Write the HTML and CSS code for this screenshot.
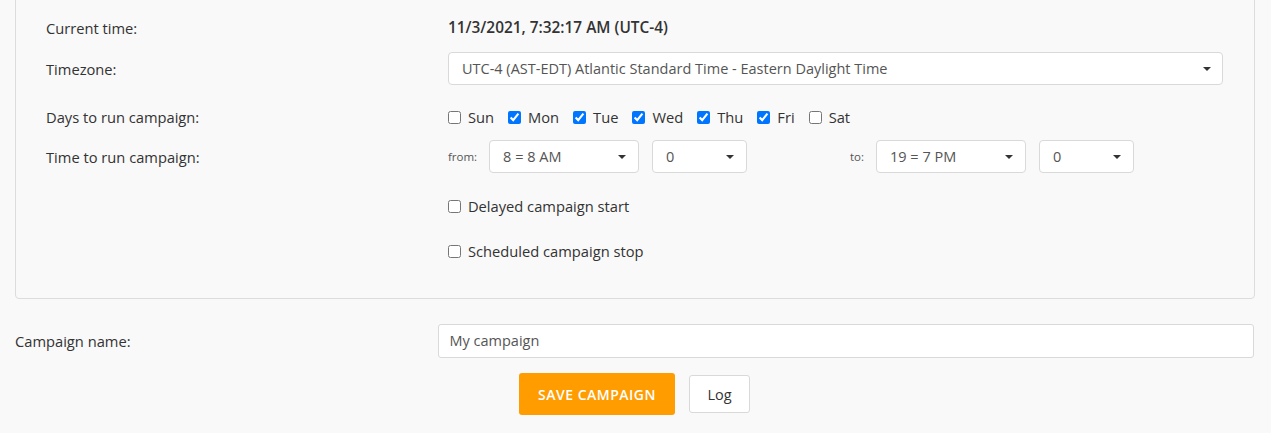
FILE: index.html
```html
<!DOCTYPE html>
<html>
<head>
<meta charset="utf-8">
<link rel="stylesheet" href="styles.css">
</head>
<body>
<div class="page">
  <div class="box">
    <div class="row r-time">
      <div class="label">Current time:</div>
      <div class="value">11/3/2021, 7:32:17 AM (UTC-4)</div>
    </div>
    <div class="row r-tz">
      <div class="label">Timezone:</div>
      <div class="select wide"><span>UTC-4 (AST-EDT) Atlantic Standard Time - Eastern Daylight Time</span><i class="caret"></i></div>
    </div>
    <div class="row r-days">
      <div class="label">Days to run campaign:</div>
      <div class="days">
        <label class="day"><input type="checkbox">Sun</label>
        <label class="day"><input type="checkbox" checked>Mon</label>
        <label class="day"><input type="checkbox" checked>Tue</label>
        <label class="day"><input type="checkbox" checked>Wed</label>
        <label class="day"><input type="checkbox" checked>Thu</label>
        <label class="day"><input type="checkbox" checked>Fri</label>
        <label class="day"><input type="checkbox">Sat</label>
      </div>
    </div>
    <div class="row r-hours">
      <div class="label">Time to run campaign:</div>
      <div class="hours">
        <div class="hgroup">
          <span class="small">from:</span>
          <div class="select hour"><span>8 = 8 AM</span><i class="caret"></i></div>
          <div class="select minute"><span>0</span><i class="caret"></i></div>
        </div>
        <div class="hgroup">
          <span class="small">to:</span>
          <div class="select hour"><span>19 = 7 PM</span><i class="caret"></i></div>
          <div class="select minute"><span>0</span><i class="caret"></i></div>
        </div>
      </div>
    </div>
    <div class="row r-delayed">
      <div></div>
      <label class="check"><input type="checkbox">Delayed campaign start</label>
    </div>
    <div class="row r-stop">
      <div></div>
      <label class="check"><input type="checkbox">Scheduled campaign stop</label>
    </div>
  </div>

  <div class="row r-name">
    <div class="label">Campaign name:</div>
    <div class="input">My campaign</div>
  </div>

  <div class="actions">
    <button class="btn save">Save campaign</button>
    <button class="btn log">Log</button>
  </div>
</div>
</body>
</html>
```
FILE: styles.css
```css
html, body {
  margin: 0;
  padding: 0;
  background: #f9f9f9;
}
body {
  font-family: "Open Sans", "Liberation Sans", sans-serif;
  font-size: 14.7px;
  color: #333;
}
.page {
  padding: 0 16px 0 15px;
}
.box {
  margin-top: -21px;
  padding: 38px 31px 37px 30px;
  border: 1px solid #dcdcdc;
  border-radius: 4px;
}
.row {
  display: grid;
  grid-template-columns: 34.15% 1fr;
  align-items: center;
}
.label {
  line-height: 20px;
}
.value {
  font-size: 15.4px;
  font-weight: 600;
  line-height: 20px;
}
.r-tz { margin-top: 14px; }
.r-days { margin-top: 22px; }
.r-hours { margin-top: 13px; }
.r-delayed { margin-top: 23px; }
.r-stop { margin-top: 25px; }

.select {
  display: flex;
  align-items: center;
  justify-content: space-between;
  box-sizing: border-box;
  height: 33px;
  padding: 0 12px 0 13px;
  background: #fff;
  border: 1px solid #d9d9d9;
  border-radius: 4px;
  font-size: 14.5px;
  color: #555;
}
.select.wide {
  padding-left: 13px;
  padding-right: 11px;
}
.caret {
  width: 0;
  height: 0;
  border-left: 4px solid transparent;
  border-right: 4px solid transparent;
  border-top: 4px solid #333;
}
.days {
  display: flex;
  align-items: center;
  line-height: 20px;
}
.day, .check {
  display: flex;
  align-items: center;
  line-height: 20px;
}
.day {
  margin-right: 14px;
}
input[type="checkbox"] {
  width: 13px;
  height: 13px;
  margin: 0 7px 0 0;
}
.hours {
  display: grid;
  grid-template-columns: 402px auto;
}
.hgroup {
  display: flex;
  align-items: center;
}
.small {
  font-size: 11.5px;
  color: #555;
  margin-right: 12px;
}
.select.hour {
  width: 150px;
  margin-right: 13px;
}
.select.minute {
  width: 95px;
}
.r-name {
  margin-top: 25px;
}
.input {
  box-sizing: border-box;
  height: 34px;
  line-height: 32px;
  padding: 0 10px;
  background: #fff;
  border: 1px solid #d9d9d9;
  border-radius: 3px;
  font-size: 14.5px;
  color: #555;
  margin-right: 1px;
}
.actions {
  display: flex;
  justify-content: center;
  align-items: center;
  gap: 14px;
  margin-top: 15px;
  padding-right: 1px;
}
.btn {
  font-family: "Open Sans", "Liberation Sans", sans-serif;
  border-radius: 3px;
  cursor: pointer;
}
.save {
  height: 42px;
  width: 156px;
  background: #ff9c00;
  border: none;
  color: #fff;
  font-size: 14px;
  font-weight: 600;
  text-transform: uppercase;
  letter-spacing: 0.5px;
}
.log {
  height: 38px;
  width: 61px;
  background: #fff;
  border: 1px solid #d9d9d9;
  color: #333;
  font-size: 14.5px;
}
```
